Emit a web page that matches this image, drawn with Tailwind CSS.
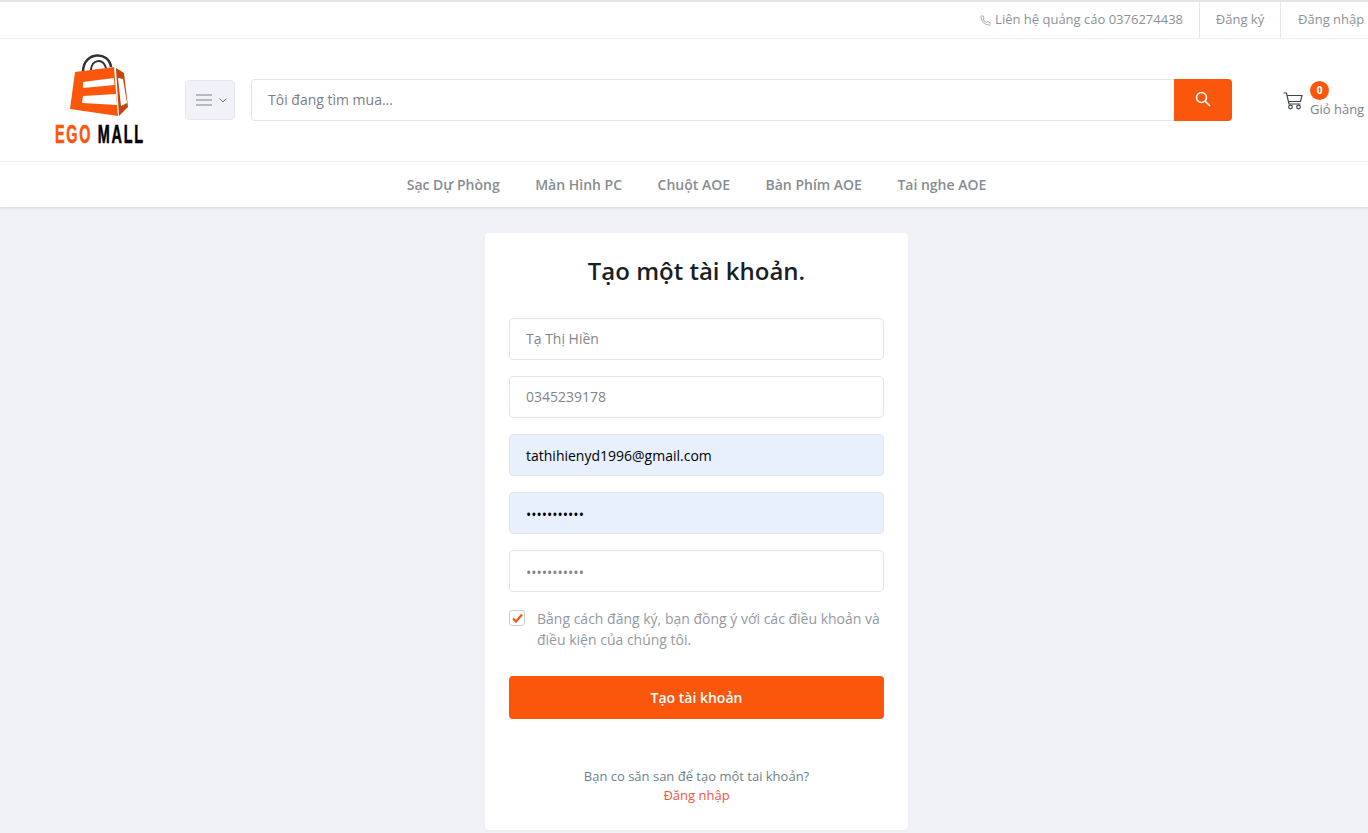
<!doctype html>
<html><head><meta charset="utf-8"><script src="https://cdn.jsdelivr.net/npm/@tailwindcss/browser@4"></script></head>
<body class="bg-[#f0f2f7] font-['Open_Sans',sans-serif] overflow-hidden">
<div class="w-[1368px] h-[833px] overflow-hidden flex flex-col">
<header class="bg-white shadow-[0_1px_3px_rgba(0,0,0,0.12)]">
  <div class="h-[39px] border-t-2 border-b border-t-[#e2e4e8] border-b-[#eef0f3] flex justify-end text-[13px] text-[#8c9298]">
    <div class="flex items-center gap-[4px] pr-[16px] border-r border-[#e2e6ec]">
      <svg class="w-[11px] h-[11px]" viewBox="0 0 24 24" fill="none" stroke="#9a9fa5" stroke-width="1.800"><path d="M22 17v3a2 2 0 0 1-2 2A19 19 0 0 1 2 4a2 2 0 0 1 2-2h3l2 5-2.500 1.500a12 12 0 0 0 8 8L16 14z"/></svg>
      <span>Liên hệ quảng cáo 0376274438</span>
    </div>
    <div class="flex items-center justify-center w-[81px] border-r border-[#e2e6ec]">Đăng ký</div>
    <div class="flex items-center pl-[17px] w-[87px] whitespace-nowrap">Đăng nhập</div>
  </div>
  <div class="h-[123px] border-b border-[#eef0f3] flex items-center relative">
    <div class="w-[185px] h-full pl-[55px] pt-[14px] shrink-0">
      <svg class="ml-[13px] block" width="62" height="65" viewBox="0 0 62 65">
        <path d="M15 18 C16 -2 41 -2 43 14" fill="none" stroke="#333" stroke-width="2.500"/>
        <path d="M23 17 C24 6 35 5 38 15" fill="none" stroke="#333" stroke-width="2"/>
        <path d="M7 19 L46 14 L50 63 L2 56 Z" fill="#fa570d"/>
        <path d="M15 29 L46 25 L46.500 32 L15 35 Z M15 43 L48 41 L49 52 L14 50 Z" fill="#fff"/>
        <path d="M48 15 L56 20 L60 54 L51 63 Z" fill="#c2460e"/>
        <path d="M50 25 L55 26 L59 50 L53 53 Z" fill="#fff"/>
      </svg>
      <div class="h-[20px] leading-[20px] mt-[6px] w-[89px] whitespace-nowrap text-[25px] font-['Liberation_Sans',sans-serif] font-bold tracking-[3px] origin-left scale-x-[0.575] [-webkit-text-stroke:0.6px]"><span class="text-[#fa570d]">EGO</span> <span class="text-black">MALL</span></div>
    </div>
    <button class="w-[50px] h-[40px] bg-[#f0f2f7] border border-[#e4e7ed] rounded-[4px] flex items-center justify-start pl-[10px] gap-[7px] shrink-0">
      <svg width="16" height="12" viewBox="0 0 16 12" stroke="#7d8287" stroke-width="1.100"><path d="M0 1h16M0 6h16M0 11h16"/></svg>
      <svg width="8" height="5" viewBox="0 0 8 5" fill="none" stroke="#7d8287"><path d="M.5.500 4 4 7.500.500"/></svg>
    </button>
    <div class="ml-[16px] w-[981px] h-[42px] flex shrink-0">
      <div class="flex-1 border border-r-0 border-[#e2e6ec] rounded-l-[4px] pl-[16px] pb-[2px] flex items-center text-[14px] text-[#7b8086]">Tôi đang tìm mua...</div>
      <button class="w-[58px] bg-[#fa570d] rounded-r-[4px] flex items-center justify-center pb-[3px]">
        <svg width="16" height="16" viewBox="0 0 16 16" fill="none" stroke="#fff" stroke-width="1.600"><circle cx="6.500" cy="6.500" r="5"/><path d="M10.200 10.200 15 15"/></svg>
      </button>
    </div>
    <div class="ml-[51px] relative w-[85px] h-[42px] shrink-0">
      <svg class="absolute left-0 top-[13px]" width="20" height="18" viewBox="0 0 20 18" fill="none" stroke="#3f454b" stroke-width="1.200"><path d="M.5 1H3.500L6 12H17.500M4 3.500H19L17.500 9.500H5.300"/><circle cx="7.500" cy="15" r="1.800"/><circle cx="15.500" cy="15" r="1.800"/></svg>
      <span class="absolute left-[27px] top-[2px] w-[19px] h-[19px] rounded-full bg-[#fa570d] text-white text-[10px] font-bold flex items-center justify-center">0</span>
      <span class="absolute left-[27px] top-[21px] text-[13px] leading-[18px] text-[#7b8086] whitespace-nowrap">Giỏ hàng</span>
    </div>
  </div>
  <nav class="h-[45px] pl-[25px] flex items-center justify-center gap-[35.5px] text-[14px] font-semibold text-[#868c91]">
    <span>Sạc Dự Phòng</span><span>Màn Hình PC</span><span>Chuột AOE</span><span>Bàn Phím AOE</span><span>Tai nghe AOE</span>
  </nav>
</header>
<main class="flex justify-center pt-[26px] pl-[25px]">
  <div class="w-[423px] h-[597px] bg-white rounded-[4px] px-[24px] pt-[20px] shadow-[0_1px_2px_rgba(0,0,0,0.03)]">
    <h1 class="text-[24px] leading-[36px] font-semibold text-[#1a1f24] text-center">Tạo một tài khoản.</h1>
    <div class="mt-[29px] flex flex-col gap-[16px] text-[14px]">
      <div class="h-[42px] border border-[#e2e6ec] rounded-[4px] px-[16px] pb-[2px] flex items-center text-[#7f858a]">Tạ Thị Hiền</div>
      <div class="h-[42px] border border-[#e2e6ec] rounded-[4px] px-[16px] pb-[2px] flex items-center text-[#7f858a]">0345239178</div>
      <div class="h-[42px] border border-[#e2e6ec] bg-[#e8f0fe] rounded-[4px] px-[16px] flex items-center text-black">tathihienyd1996@gmail.com</div>
      <div class="h-[42px] border border-[#e2e6ec] bg-[#e8f0fe] rounded-[4px] px-[16px] pt-[2px] flex items-center text-black">•••••••••••</div>
      <div class="h-[42px] border border-[#e2e6ec] rounded-[4px] px-[16px] pt-[2px] flex items-center text-[#7f858a]">•••••••••••</div>
    </div>
    <div class="mt-[16px] flex gap-[12px]">
      <span class="mt-[2px] w-[16px] h-[16px] border border-[#c9ced6] rounded-[3px] flex items-center justify-center shrink-0">
        <svg width="11" height="10" viewBox="0 0 11 10" fill="none" stroke="#fa570d" stroke-width="2.200"><path d="M1 5.500 4 8.500 10 1.500"/></svg>
      </span>
      <p class="text-[14px] leading-[21px] text-[#94999f]">Bằng cách đăng ký, bạn đồng ý với các điều khoản và điều kiện của chúng tôi.</p>
    </div>
    <button class="mt-[26px] w-full h-[43px] bg-[#fa570d] rounded-[4px] text-white text-[14px] font-semibold">Tạo tài khoản</button>
    <div class="mt-[48px] text-center text-[13px] leading-[19px]">
      <p class="text-[#6f7f8a]">Bạn co săn san để tạo một tai khoản?</p>
      <p class="text-[#f5533d]">Đăng nhập</p>
    </div>
  </div>
</main>
</div>
</body></html>
